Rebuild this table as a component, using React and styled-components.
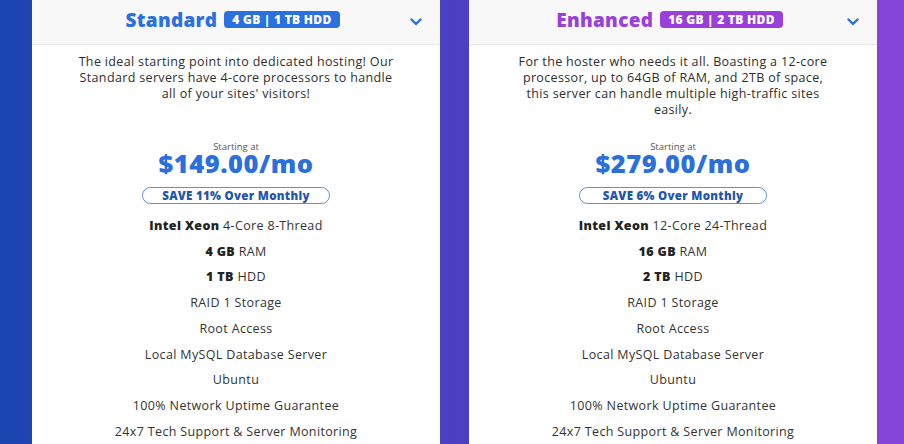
import React from 'react';
import styled, { createGlobalStyle } from 'styled-components';

const Global = createGlobalStyle`
  html, body { margin: 0; padding: 0; }
  body {
    width: 904px;
    height: 444px;
    overflow: hidden;
    font-family: "Open Sans", "Lato", sans-serif;
  }
`;

const plans = [
  {
    name: 'Standard',
    accent: '#2a70de',
    badge: '4 GB | 1 TB HDD',
    desc: "The ideal starting point into dedicated hosting! Our Standard servers have 4-core processors to handle all of your sites' visitors!",
    price: '$149.00/mo',
    save: 'SAVE 11% Over Monthly',
    features: [
      [<b key="b">Intel Xeon</b>, ' 4-Core 8-Thread'],
      [<b key="b">4 GB</b>, ' RAM'],
      [<b key="b">1 TB</b>, ' HDD'],
    ],
  },
  {
    name: 'Enhanced',
    accent: '#9b3fdb',
    badge: '16 GB | 2 TB HDD',
    desc: 'For the hoster who needs it all. Boasting a 12-core processor, up to 64GB of RAM, and 2TB of space, this server can handle multiple high-traffic sites easily.',
    price: '$279.00/mo',
    save: 'SAVE 6% Over Monthly',
    features: [
      [<b key="b">Intel Xeon</b>, ' 12-Core 24-Thread'],
      [<b key="b">16 GB</b>, ' RAM'],
      [<b key="b">2 TB</b>, ' HDD'],
    ],
  },
];

const common = [
  'RAID 1 Storage',
  'Root Access',
  'Local MySQL Database Server',
  'Ubuntu',
  '100% Network Uptime Guarantee',
  '24x7 Tech Support & Server Monitoring',
];

const Page = styled.div`
  height: 444px;
  display: flex;
  align-items: flex-start;
  gap: 29px;
  padding-left: 32px;
  background: linear-gradient(90deg, #1b45b0 0%, #3342b9 30%, #4d3fc3 52%, #7843d3 85%, #8645d9 100%);
  overflow: hidden;
`;

const Card = styled.div`
  width: 408px;
  min-height: 444px;
  flex-shrink: 0;
  background: #fff;
  display: flex;
  flex-direction: column;
  align-items: center;
  & > * { flex-shrink: 0; }
`;

const Header = styled.div`
  width: 100%;
  height: 45px;
  box-sizing: border-box;
  background: #f8f8f8;
  border-bottom: 1px solid #e6e6e6;
  display: flex;
  align-items: center;
  justify-content: center;
  gap: 7px;
  position: relative;
  padding: 0 7px 5px 0;
`;

const Title = styled.span`
  font-size: 19px;
  font-weight: 800;
  color: ${p => p.$accent};
  letter-spacing: 0.3px;
`;

const Badge = styled.span`
  background: ${p => p.$accent};
  color: #fff;
  font-size: 12px;
  font-weight: 800;
  line-height: 13px;
  padding: 2px 8px;
  border-radius: 4px;
  letter-spacing: 0.3px;
`;

const Chevron = styled.svg`
  position: absolute;
  right: 18px;
  top: 18px;
`;

const Desc = styled.p`
  margin: 0;
  padding-top: 9px;
  width: 322px;
  min-height: 77px;
  box-sizing: border-box;
  font-size: 12.5px;
  line-height: 16px;
  letter-spacing: 0.35px;
  color: #2e2e2e;
  text-align: center;
`;

const Starting = styled.div`
  margin-top: 20px;
  font-size: 9.5px;
  line-height: 10px;
  color: #555;
`;

const Price = styled.div`
  margin-top: -2px;
  font-size: 25.5px;
  font-weight: 800;
  line-height: 26px;
  color: #2a6fdb;
  letter-spacing: 0.5px;
`;

const Save = styled.div`
  margin-top: 11px;
  width: 188px;
  height: 17px;
  box-sizing: border-box;
  border: 1.5px solid #5b8fe0;
  border-radius: 10px;
  font-size: 11.5px;
  font-weight: 800;
  letter-spacing: 0.3px;
  color: #1f56ad;
  display: flex;
  align-items: center;
  justify-content: center;
`;

const Features = styled.ul`
  list-style: none;
  margin: 9px 0 0;
  padding: 0;
  text-align: center;
`;

const Feature = styled.li`
  font-size: 12.5px;
  line-height: 25.7px;
  letter-spacing: 0.35px;
  color: #333;
  b { font-weight: 800; color: #222; }
`;

const Plan = ({ plan }) => (
  <Card>
    <Header>
      <Title $accent={plan.accent}>{plan.name}</Title>
      <Badge $accent={plan.accent}>{plan.badge}</Badge>
      <Chevron width="12" height="8" viewBox="0 0 12 8">
        <path d="M1.5 1.5 L6 6 L10.5 1.5" fill="none" stroke="#2a6fdb" strokeWidth="2.4" strokeLinecap="round" strokeLinejoin="round" />
      </Chevron>
    </Header>
    <Desc>{plan.desc}</Desc>
    <Starting>Starting at</Starting>
    <Price>{plan.price}</Price>
    <Save>{plan.save}</Save>
    <Features>
      {plan.features.map((f, i) => <Feature key={i}>{f}</Feature>)}
      {common.map(c => <Feature key={c}>{c}</Feature>)}
    </Features>
  </Card>
);

export default function App() {
  return (
    <>
      <Global />
      <Page>
        {plans.map(p => <Plan key={p.name} plan={p} />)}
      </Page>
    </>
  );
}
